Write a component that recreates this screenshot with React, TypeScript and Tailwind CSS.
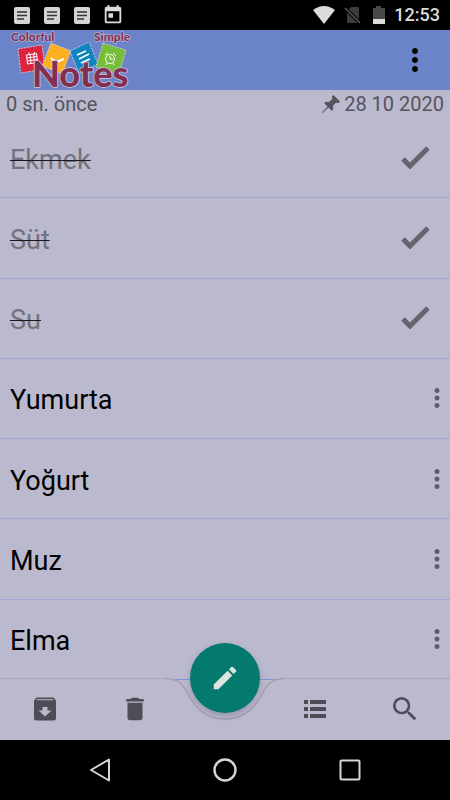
import { useState } from 'react';
import { MdDelete, MdEdit, MdMoreVert, MdSearch, MdToday } from 'react-icons/md';

interface Item {
  id: number;
  text: string;
  done: boolean;
}

const initialItems: Item[] = [
  { id: 1, text: 'Ekmek', done: true },
  { id: 2, text: 'Süt', done: true },
  { id: 3, text: 'Su', done: true },
  { id: 4, text: 'Yumurta', done: false },
  { id: 5, text: 'Yoğurt', done: false },
  { id: 6, text: 'Muz', done: false },
  { id: 7, text: 'Elma', done: false },
];

function NoteIcon() {
  return (
    <svg width="16" height="17" viewBox="0 0 16 17" aria-hidden="true">
      <rect width="16" height="17" rx="2" fill="#d4d4d4" />
      <path d="M3 5h10M3 8.500h10M3 12h7" stroke="#333" strokeWidth="1.4" />
    </svg>
  );
}

function StatusBar() {
  return (
    <div className="flex h-[30px] items-center justify-between bg-black pr-2.5 pl-3.5 text-[#dcdcdc]">
      <div className="flex items-center gap-3.5">
        <NoteIcon />
        <NoteIcon />
        <NoteIcon />
        <MdToday className="-ml-0.5 size-[22px]" />
      </div>
      <div className="flex items-center">
        <svg className="mr-2" width="24" height="18" viewBox="0 0 24 18" aria-hidden="true">
          <path d="M1 4Q12-4 23 4L12 18z" fill="#dcdcdc" />
        </svg>
        <svg className="mr-2.5" width="18" height="18" viewBox="0 0 18 18" aria-hidden="true">
          <path d="M7 1h7q1 0 1 1v14q0 1-1 1H4q-1 0-1-1V5z" fill="#3c3c3c" />
          <path d="M1 2l15 15" stroke="#000" strokeWidth="3.5" />
          <path d="M1 2l15 15" stroke="#555" strokeWidth="1.6" />
        </svg>
        <svg className="mr-2" width="14" height="18" viewBox="0 0 14 18" aria-hidden="true">
          <path d="M4 0h5v2h4v12H1V2h3z" fill="#484848" />
          <path d="M1 13h12v5H1z" fill="#dcdcdc" />
        </svg>
        <span className="text-[18px] leading-5 font-medium">12:53</span>
      </div>
    </div>
  );
}

function Logo() {
  return (
    <svg
      className="overflow-visible"
      width="124"
      height="60"
      viewBox="0 0 124 60"
      role="img"
      aria-label="Colorful Simple Notes"
    >
      <g stroke="#d8d4e6" strokeWidth="0.8" strokeDasharray="2 1">
        <path d="M8 19l24-4 3 24-24 4z" fill="#dc2340" />
        <path d="M41 13l20 8-9 23-20-8z" fill="#fbb022" />
        <path d="M60 21l19-9 9 22-19 9z" fill="#1184bf" />
        <path d="M93 13l23 7-7 24-23-7z" fill="#76bd3a" />
      </g>
      {/* calendar, tick, lines and clock on the tiles */}
      <g fill="none" stroke="#fff" strokeWidth="1">
        <path d="M16.500 25l10-1.500 1 9-10 1.500zM17 28l10-1.500M17.500 31l10-1.500M20 24.500l1 9M23.500 24l1 9M19 22.500v2.500M24.500 22v2.500" />
        <path d="M41 28l5 4 8-3" strokeWidth="2" />
        <path d="M67 25l9-4M69 29l10-5M71 33l9-4" strokeWidth="1.6" />
        <circle cx="100" cy="29" r="4.500" />
        <path d="M100 26v3h3M95 25l3-2M103 23l3 3M97 33l-1 2M103 33l1 2" />
      </g>
      <g
        className="font-['Lato','Roboto',sans-serif] font-black"
        fill="#813052"
        stroke="#cfc8de"
        strokeLinejoin="round"
        paintOrder="stroke"
      >
        <text x="1" y="11" fontSize="12" strokeWidth="1">Colorful</text>
        <text x="84" y="11" fontSize="12" strokeWidth="1">Simple</text>
        <text x="22" y="57" fontSize="36" strokeWidth="1.5">Notes</text>
      </g>
    </svg>
  );
}

function PinIcon() {
  return (
    <svg width="18" height="18" viewBox="0 0 18 18" fill="currentColor" aria-hidden="true">
      <path d="M10 1.500L11.500 0L18 6.500L16.500 8Q15 8 14 7.500L11 11Q12 14 10 16L6.500 12.500L0.500 18L0 17.500L5.500 11.500L2 8Q4 6 7 7L10.500 4Q9.500 3 10 1.500z" />
    </svg>
  );
}

function ArchiveIcon() {
  return (
    <svg width="24" height="24" viewBox="0 0 24 24" aria-hidden="true">
      <path
        d="M3.500.5h17l2.500 3V21q0 2.500-2.500 2.500h-17Q1 23.500 1 21V3.500zM3.500 2.300v1h17v-1zM9.500 10v3.500H5.500L12 19.500l6.500-6H14.500V10z"
        fill="currentColor"
        fillRule="evenodd"
      />
    </svg>
  );
}

function ListIcon() {
  return (
    <svg width="24" height="18" viewBox="0 0 24 18" fill="currentColor" aria-hidden="true">
      <path d="M1 0h4v4H1zM1 7h4v4H1zM1 14h4v4H1zM7 0h16v4H7zM7 7h16v4H7zM7 14h16v4H7z" />
    </svg>
  );
}

function ItemRow({ item, onToggle }: { item: Item; onToggle: () => void }) {
  return (
    <li className="flex min-h-20 flex-1 items-center justify-between border-b border-[#a5a5d2] pl-2.5">
      <button type="button" onClick={onToggle} className="flex-1 pt-1 text-left text-[27px] leading-8">
        {item.done ? (
          <s className="text-[#73727d] decoration-[#18181c] decoration-1">{item.text}</s>
        ) : (
          item.text
        )}
      </button>
      {item.done ? (
        <svg className="mr-5" width="30" height="26" viewBox="0 0 30 26" role="img" aria-label="Tamamlandı">
          <path d="M3 14l7 7L28 3" fill="none" stroke="#65656d" strokeWidth="5" />
        </svg>
      ) : (
        <button type="button" aria-label="Seçenekler" className="-mr-0.5 text-[#5c5b66]">
          <MdMoreVert className="size-[30px]" />
        </button>
      )}
    </li>
  );
}

function BottomBar() {
  const btn = 'flex h-full items-center justify-center';
  return (
    <div className="relative h-[60px] bg-[#bbb9cd]">
      {/* bar edge with the cradle for the round button */}
      <div className="absolute inset-x-0 -top-0.5 flex h-12">
        <div className="h-0.5 flex-1 border-t border-[#a9a5b8] bg-[#bbb9cd]" />
        <svg width="120" height="48" viewBox="0 0 120 48" aria-hidden="true">
          <path d="M0 0H120V2H0z" fill="#bbb9cd" />
          <path d="M10 1.500H110" stroke="#7f97dc" />
          <path
            d="M0 0.500C13 0.500 18 6 23 16C32 34 44 41 60 41C76 41 88 34 97 16C102 6 107 0.500 120 0.500"
            fill="none"
            stroke="#a39eae"
            strokeWidth="1.3"
          />
        </svg>
        <div className="h-0.5 flex-1 border-t border-[#a9a5b8] bg-[#bbb9cd]" />
      </div>
      <div className="relative grid h-full grid-cols-5 pb-0.5 text-[#4d4c57]">
        <button type="button" aria-label="Arşivle" className={btn}>
          <ArchiveIcon />
        </button>
        <button type="button" aria-label="Sil" className={btn}>
          <MdDelete className="size-[30px]" />
        </button>
        <span />
        <button type="button" aria-label="Liste" className={btn}>
          <ListIcon />
        </button>
        <button type="button" aria-label="Ara" className={btn}>
          <MdSearch className="size-8" />
        </button>
      </div>
      <button
        type="button"
        aria-label="Düzenle"
        className="absolute -top-[37px] left-1/2 flex size-[70px] -translate-x-1/2 items-center justify-center rounded-full bg-[#04796d] text-[#dde3dd] shadow-[0_3px_6px_rgba(60,60,90,0.3)]"
      >
        <MdEdit className="size-[30px]" />
      </button>
    </div>
  );
}

function NavBar() {
  return (
    <nav className="grid h-[60px] grid-cols-3 items-center justify-items-center bg-black px-[37px]">
      <button type="button" aria-label="Geri">
        <svg width="24" height="24" viewBox="0 0 24 24" fill="none" stroke="#d6d6d6" strokeWidth="2" strokeLinejoin="round">
          <path d="M21 1.500v21L3 12z" />
        </svg>
      </button>
      <button type="button" aria-label="Ana ekran">
        <svg width="24" height="24" viewBox="0 0 24 24" fill="none" stroke="#d6d6d6" strokeWidth="2.4">
          <circle cx="12" cy="12" r="10.500" />
        </svg>
      </button>
      <button type="button" aria-label="Son uygulamalar">
        <svg width="24" height="24" viewBox="0 0 24 24" fill="none" stroke="#d6d6d6" strokeWidth="2">
          <rect x="2.500" y="2.500" width="19" height="19" rx="1" />
        </svg>
      </button>
    </nav>
  );
}

export default function App() {
  const [items, setItems] = useState(initialItems);

  function toggle(id: number) {
    setItems(items.map((it) => (it.id === id ? { ...it, done: !it.done } : it)));
  }

  return (
    <div className="flex min-h-screen flex-col bg-[#bbb9cd] font-['Roboto','Liberation_Sans',sans-serif] text-black">
      <StatusBar />
      <header className="flex h-[60px] items-center justify-between bg-[#6b84c9] pr-[17px] pl-2.5">
        <Logo />
        <button type="button" aria-label="Menü">
          <MdMoreVert className="size-9" />
        </button>
      </header>
      <div className="flex h-7 items-center justify-between px-1.5 text-[20px] leading-6 text-[#55545e]">
        <span>0 sn. önce</span>
        <span className="flex items-center gap-1">
          <PinIcon />
          28 10 2020
        </span>
      </div>
      <ul className="flex flex-1 flex-col">
        {items.map((item) => (
          <ItemRow key={item.id} item={item} onToggle={() => toggle(item.id)} />
        ))}
      </ul>
      <BottomBar />
      <NavBar />
    </div>
  );
}
